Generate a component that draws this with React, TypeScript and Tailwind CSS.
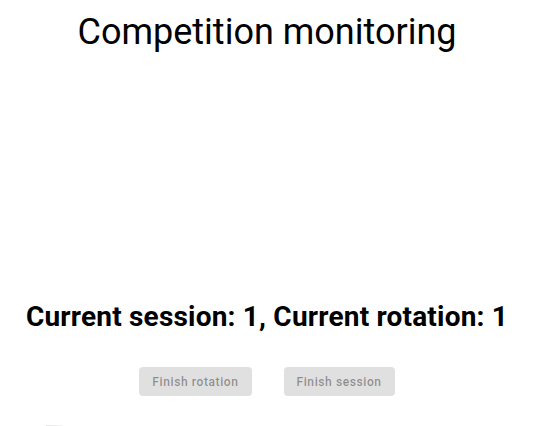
import React from "react";

export default function App() {
  return (
    <div className="w-[534px] bg-white text-black" style={{ fontFamily: "Roboto, 'Liberation Sans', sans-serif" }}>
      <div className="flex flex-col items-center">
        <h1 className="mt-[10px] text-[36px] leading-[44px] font-normal">Competition monitoring</h1>
        <div className="h-[247px]" />
        <h2 className="text-[28px] leading-[32px] font-bold tracking-[0.2px]">Current session: 1, Current rotation: 1</h2>
        <div className="mt-[34px] flex gap-8">
          <button
            disabled
            className="h-[29px] rounded px-[13px] bg-[#e0e0e0] text-[12px] font-medium tracking-[0.05em] text-[rgba(0,0,0,0.38)]"
          >
            Finish rotation
          </button>
          <button
            disabled
            className="h-[29px] rounded px-[13px] bg-[#e0e0e0] text-[12px] font-medium tracking-[0.05em] text-[rgba(0,0,0,0.38)]"
          >
            Finish session
          </button>
        </div>
      </div>
      <div className="mt-[29px] ml-[46px] h-[8px] w-[16px] bg-gradient-to-r from-[#e4e4e4] to-[#f4f4f4]" />
    </div>
  );
}
